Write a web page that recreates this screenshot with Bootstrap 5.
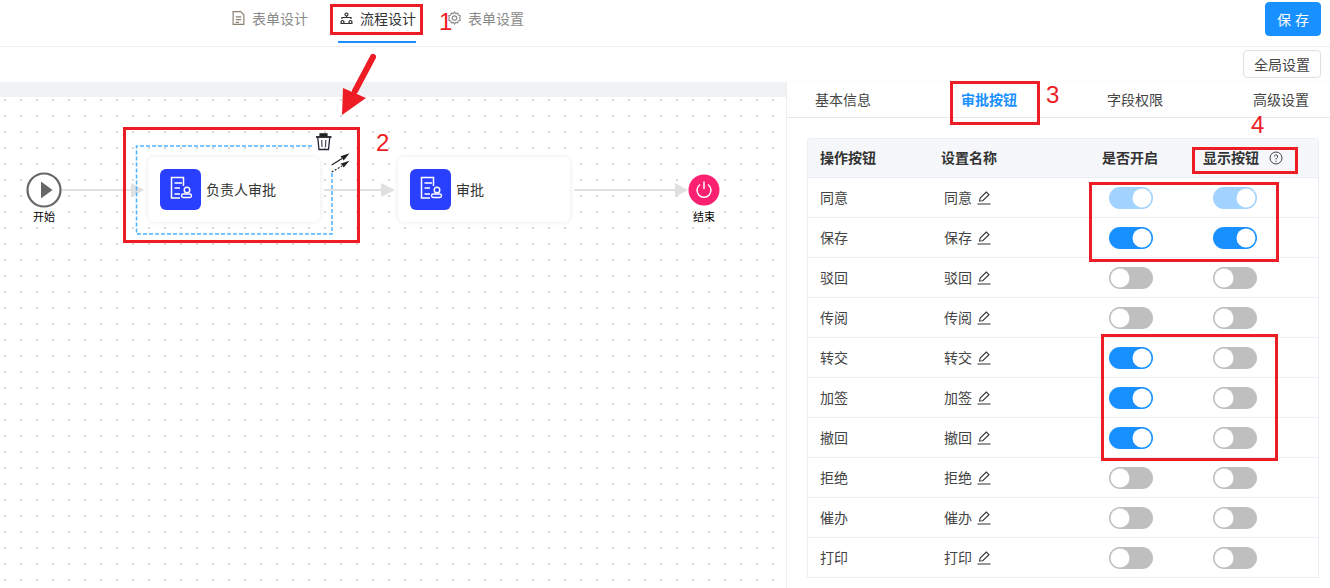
<!DOCTYPE html>
<html lang="zh-CN">
<head>
  <meta charset="UTF-8">
  <title>流程设计</title>
  <link href="https://cdn.jsdelivr.net/npm/bootstrap@5.3.3/dist/css/bootstrap.min.css" rel="stylesheet">
  <style>
    html, body { height: 100%; overflow: hidden; }
    body { font-family: "Noto Sans CJK SC", "Noto Sans", sans-serif; font-size: 14px; color: #333; background: #fff; position: relative; }
    .top-bar { height: 47px; border-bottom: 1px solid #efefef; padding: 2px 9px 0 232px; }
    .top-tab { display: flex; align-items: center; gap: 7px; height: 41px; padding-bottom: 7px; color: #8a8a8a; text-decoration: none; font-size: 14px; line-height: 1; border-bottom: 2px solid transparent; }
    .top-tab.on { color: #333; border-bottom-color: #1890ff; padding-left: 2px; margin: 0 32px 0 30px; }
    .top-tab svg { width: 13px; height: 14px; }
    .save-btn { width: 56px; height: 34px; padding: 0; font-size: 14px; background: #1890ff; border-color: #1890ff; letter-spacing: 4px; text-indent: 4px; border-radius: 4px; }
    .tool-row { height: 35px; padding: 3px 9px 0 0; }
    .global-btn { width: 78px; height: 28px; padding: 0; font-size: 14px; line-height: 24px; color: #444; border: 1px solid #dcdfe6; border-radius: 4px; background: #fff; }
    .work-area { height: 506px; }
    .flow-side { width: 786px; flex: none; position: relative; background: #fff; }
    .flow-strip { height: 15px; background: #f0f2f5; }
    .flow-canvas { height: 491px; background-image: radial-gradient(circle, #d8d8d8 .7px, transparent 1px); background-size: 16px 16px; background-position: -3px -5px; }
    .flow-lines { position: absolute; left: 0; top: 0; width: 786px; height: 300px; }
    .flow-node { position: absolute; top: 75px; width: 172px; height: 65px; padding: 12px; background: #fff; border-radius: 6px; box-shadow: 0 0 4px rgba(0, 0, 0, .1); gap: 5px; }
    .node-a { left: 148px; }
    .node-b { left: 398px; }
    .node-icon { width: 41px; height: 41px; flex: none; border-radius: 6px; background: #2a40ff; }
    .node-cap { position: absolute; top: 127px; width: 40px; text-align: center; font-size: 11px; color: #000; line-height: 14px; }
    .detail-side { flex: 1; border-left: 1px solid #eee; background: #fff; box-shadow: -2px 0 4px rgba(0, 0, 0, .03); }
    .detail-tabs { height: 36px; padding: 0 24px 0 28px; border-bottom: 1px solid #e8e8e8; }
    .detail-tabs a { color: #444; text-decoration: none; font-size: 14px; line-height: 35px; }
    .detail-tabs a.on { color: #1890ff; font-weight: 700; }
    .btn-grid { margin: 20px 14px 0 20px; border: 1px solid #ebeef5; border-bottom: 0; border-radius: 4px 4px 0 0; overflow: hidden; }
    .btn-grid table { table-layout: fixed; width: 510px; margin: 0; font-size: 14px; }
    .btn-grid th, .btn-grid td { height: 40px; padding: 0; vertical-align: middle; color: #444; border-bottom: 1px solid #ebeef5; box-shadow: none; background: transparent; }
    .btn-grid th { height: 38px; background: #f5f7fa; color: #333; font-weight: 700; }
    .c-a { padding-left: 12px !important; }
    .c-b { padding-left: 15px !important; }
    .c-bh { padding-left: 12px !important; }
    .c-c { padding-left: 12px !important; }
    .c-ch { padding-left: 5px !important; }
    .c-d { padding-left: 12px !important; }
    .c-dh { padding-left: 2px !important; }
    .pen { width: 14px; height: 14px; margin-left: 5px; vertical-align: -2px; }
    .help { width: 14px; height: 14px; margin-left: 10px; vertical-align: -2px; }
    .form-switch.flip { min-height: 0; margin: 1px 0 0; padding: 0; display: block; height: 22px; line-height: 0; }
    .form-switch.flip .form-check-input { width: 44px; height: 22px; margin: 0; border: 0; border-radius: 11px; background-color: #bfbfbf; float: none; opacity: 1; box-shadow: none; background-image: url("data:image/svg+xml,<svg xmlns='http://www.w3.org/2000/svg' viewBox='-4 -4 8 8'><circle r='3.45' fill='%23fff'/></svg>"); }
    .form-switch.flip .form-check-input:checked { background-color: #1890ff; }
    .form-switch.flip .form-check-input:disabled { opacity: .4; }
    .mark-box { position: absolute; border: 3px solid #ee1c25; pointer-events: none; }
    .mark-num { position: absolute; color: #ee1c25; font-family: "Liberation Sans", sans-serif; font-size: 24px; line-height: 24px; }
    .mark-arrow { position: absolute; left: 335px; top: 48px; width: 50px; height: 72px; }
  </style>
</head>
<body>
  <svg width="0" height="0" class="d-block position-absolute">
    <symbol id="pen-ico" viewBox="0 0 14 14">
      <path d="M2.500 10 3.200 7 9.300 1 12 3.700 5.800 9.700Z M.5 13H13.500" fill="none" stroke="#333" stroke-width="1.100"/>
    </symbol>
    <symbol id="form-ico" viewBox="0 0 41 41">
      <path d="M23.500 17V8.500H11.500V29H20 M14.500 14H22 M14.500 19H20 M14.500 25H20" fill="none" stroke="#fff" stroke-width="1.500"/>
      <circle cx="27" cy="21" r="2.800" fill="none" stroke="#fff" stroke-width="1.400"/>
      <rect x="21.500" y="25" width="10" height="3.500" rx="1.700" fill="none" stroke="#fff" stroke-width="1.400"/>
    </symbol>
  </svg>

  <header class="top-bar d-flex justify-content-between align-items-start">
    <nav class="d-flex">
      <a class="top-tab" href="#">
        <svg viewBox="1.500 .5 11 13"><path d="M2 1h7l3 3v9H2Z M4.500 6h5M4.500 8.500h5M4.500 11h3" fill="none" stroke="#8a8070" stroke-width="1.100"/></svg>
        表单设计
      </a>
      <a class="top-tab on" href="#">
        <svg viewBox=".5 1 13 13"><path d="M7 2.500a1.500 1.500 0 1 0 .01 0Z M3 10a1.500 1.500 0 1 0 .01 0Z M11 10a1.500 1.500 0 1 0 .01 0Z M2.500 8.500V7h9v1.500 M7 5.500V7" fill="none" stroke="#333" stroke-width="1.200"/><path d="M1 12.500h4v1H1Z M5 12.500h4v1H5Z M9 12.500h4v1H9Z" fill="#333"/></svg>
        流程设计
      </a>
      <a class="top-tab" href="#">
        <svg viewBox=".5 .5 13 13"><circle cx="7" cy="7" r="2.200" fill="none" stroke="#8a8a8a" stroke-width="1.200"/><path d="M7 1 8.200 2.600 10.200 2.100 10.800 4.100 12.800 4.800 12.100 7 12.800 9.200 10.800 9.900 10.200 11.900 8.200 11.400 7 13 5.800 11.400 3.800 11.900 3.200 9.900 1.200 9.200 1.900 7 1.200 4.800 3.200 4.100 3.800 2.100 5.800 2.600Z" fill="none" stroke="#8a8a8a" stroke-width="1.100"/></svg>
        表单设置
      </a>
    </nav>
    <button type="button" class="btn btn-primary save-btn">保存</button>
  </header>

  <div class="tool-row d-flex justify-content-end">
    <button type="button" class="btn global-btn">全局设置</button>
  </div>

  <main class="work-area d-flex">
    <section class="flow-side">
      <div class="flow-strip"></div>
      <div class="flow-canvas"></div>

      <svg class="flow-lines" viewBox="0 0 786 300">
        <g stroke="#e0e0e0" stroke-width="2" fill="#e0e0e0">
          <path d="M62 108H132"/><path d="M131 101 144 108 131 115Z" stroke="none"/>
          <path d="M324 108H382"/><path d="M381 101 395 108 381 115Z" stroke="none"/>
          <path d="M574 108H676"/><path d="M675 101 688 108 675 115Z" stroke="none"/>
        </g>
        <path d="M312 64H136.500V152H332V90" fill="none" stroke="#4db2ff" stroke-width="1.500" stroke-dasharray="4 2"/>
        <circle cx="44" cy="108" r="16.500" fill="#fff" stroke="#666" stroke-width="2.200"/>
        <path d="M41 99.500 52.500 108 41 116.500Z" fill="#666"/>
        <circle cx="704" cy="108" r="15.500" fill="#fb2070"/>
        <path d="M700 102.500a7 7 0 1 0 8 0M704 99.500V107" fill="none" stroke="#fff" stroke-width="1.500"/>
      </svg>

      <div class="flow-node node-a d-flex align-items-center">
        <svg class="node-icon"><use href="#form-ico"/></svg>
        <span>负责人审批</span>
      </div>
      <div class="flow-node node-b d-flex align-items-center">
        <svg class="node-icon"><use href="#form-ico"/></svg>
        <span>审批</span>
      </div>
      <div class="node-cap" style="left:24px">开始</div>
      <div class="node-cap" style="left:684px">结束</div>

      <svg class="position-absolute" style="left:315px;top:50px" width="18" height="20" viewBox="0 0 18 20">
        <path d="M5 4.500V1.800H12V4.500" fill="#222" stroke="#222" stroke-width="1.200"/>
        <path d="M1 5H16.500" stroke="#222" stroke-width="1.800"/>
        <path d="M2.800 6 4 17.500H13.500L14.700 6" fill="none" stroke="#223" stroke-width="1.300"/>
        <path d="M6.700 8 7 15M10.800 8 10.500 15" stroke="#445" stroke-width="1.200"/>
      </svg>
      <svg class="position-absolute" style="left:330px;top:71px" width="22" height="20" viewBox="0 0 22 20">
        <path d="M1.700 12 12 5.500" stroke="#222" stroke-width="1.200"/>
        <path d="M19.500 .3 10.500 3.300 13.700 7.500Z" fill="#222"/>
        <path d="M1.700 19 12 13" stroke="#222" stroke-width="1.200" stroke-dasharray="2 1.500"/>
        <path d="M19.500 7.700 11 10.500 13.700 14.500Z" fill="#222"/>
      </svg>
    </section>

    <aside class="detail-side">
      <nav class="detail-tabs d-flex justify-content-between">
        <a href="#">基本信息</a>
        <a href="#" class="on">审批按钮</a>
        <a href="#">字段权限</a>
        <a href="#">高级设置</a>
      </nav>
      <div class="btn-grid">
        <table class="table">
          <colgroup><col style="width:121px"><col style="width:168px"><col style="width:104px"><col style="width:117px"></colgroup>
          <thead>
            <tr>
              <th class="c-a">操作按钮</th>
              <th class="c-bh">设置名称</th>
              <th class="c-ch">是否开启</th>
              <th class="c-dh">显示按钮<svg class="help" viewBox="0 0 14 14"><circle cx="7" cy="7" r="6" fill="none" stroke="#444" stroke-width="1"/><path d="M5.300 5.500a1.700 1.700 0 1 1 2.500 1.500C7.200 7.400 7 7.800 7 8.500M7 9.800v1.200" fill="none" stroke="#444" stroke-width="1"/></svg></th>
            </tr>
          </thead>
          <tbody id="btnRows"></tbody>
        </table>
      </div>
    </aside>
  </main>

  <!-- red notes drawn over the screenshot -->
  <div class="mark-box" style="left:330px;top:4px;width:93px;height:31px"></div>
  <div class="mark-box" style="left:123px;top:127px;width:237px;height:116px"></div>
  <div class="mark-box" style="left:950px;top:81px;width:90px;height:44px"></div>
  <div class="mark-box" style="left:1192px;top:147px;width:106px;height:27px"></div>
  <div class="mark-box" style="left:1089px;top:182px;width:190px;height:80px"></div>
  <div class="mark-box" style="left:1101px;top:334px;width:177px;height:127px"></div>
  <div class="mark-num" style="left:439px;top:10px">1</div>
  <div class="mark-num" style="left:376px;top:131px">2</div>
  <div class="mark-num" style="left:1046px;top:83px">3</div>
  <div class="mark-num" style="left:1251px;top:113px">4</div>
  <svg class="mark-arrow" viewBox="0 0 50 72">
    <path d="M38 9 20 43" stroke="#ee1c25" stroke-width="6" stroke-linecap="round"/>
    <path d="M7 67 8 40 31 50Z" fill="#ee1c25"/>
  </svg>

  <script>
    const rows = [
      ['同意', 1, 1, true], ['保存', 1, 1], ['驳回', 0, 0], ['传阅', 0, 0], ['转交', 1, 0],
      ['加签', 1, 0], ['撤回', 1, 0], ['拒绝', 0, 0], ['催办', 0, 0], ['打印', 0, 0]
    ];
    const flip = (on, off) => `<div class="form-check form-switch flip"><input class="form-check-input" type="checkbox" ${on ? 'checked' : ''} ${off ? 'disabled' : ''}></div>`;
    document.getElementById('btnRows').innerHTML = rows.map(r => `
      <tr>
        <td class="c-a">${r[0]}</td>
        <td class="c-b">${r[0]}<svg class="pen"><use href="#pen-ico"/></svg></td>
        <td class="c-c">${flip(r[1], r[3])}</td>
        <td class="c-d">${flip(r[2], r[3])}</td>
      </tr>`).join('');
  </script>
  <script src="https://cdn.jsdelivr.net/npm/bootstrap@5.3.3/dist/js/bootstrap.bundle.min.js"></script>
</body>
</html>
